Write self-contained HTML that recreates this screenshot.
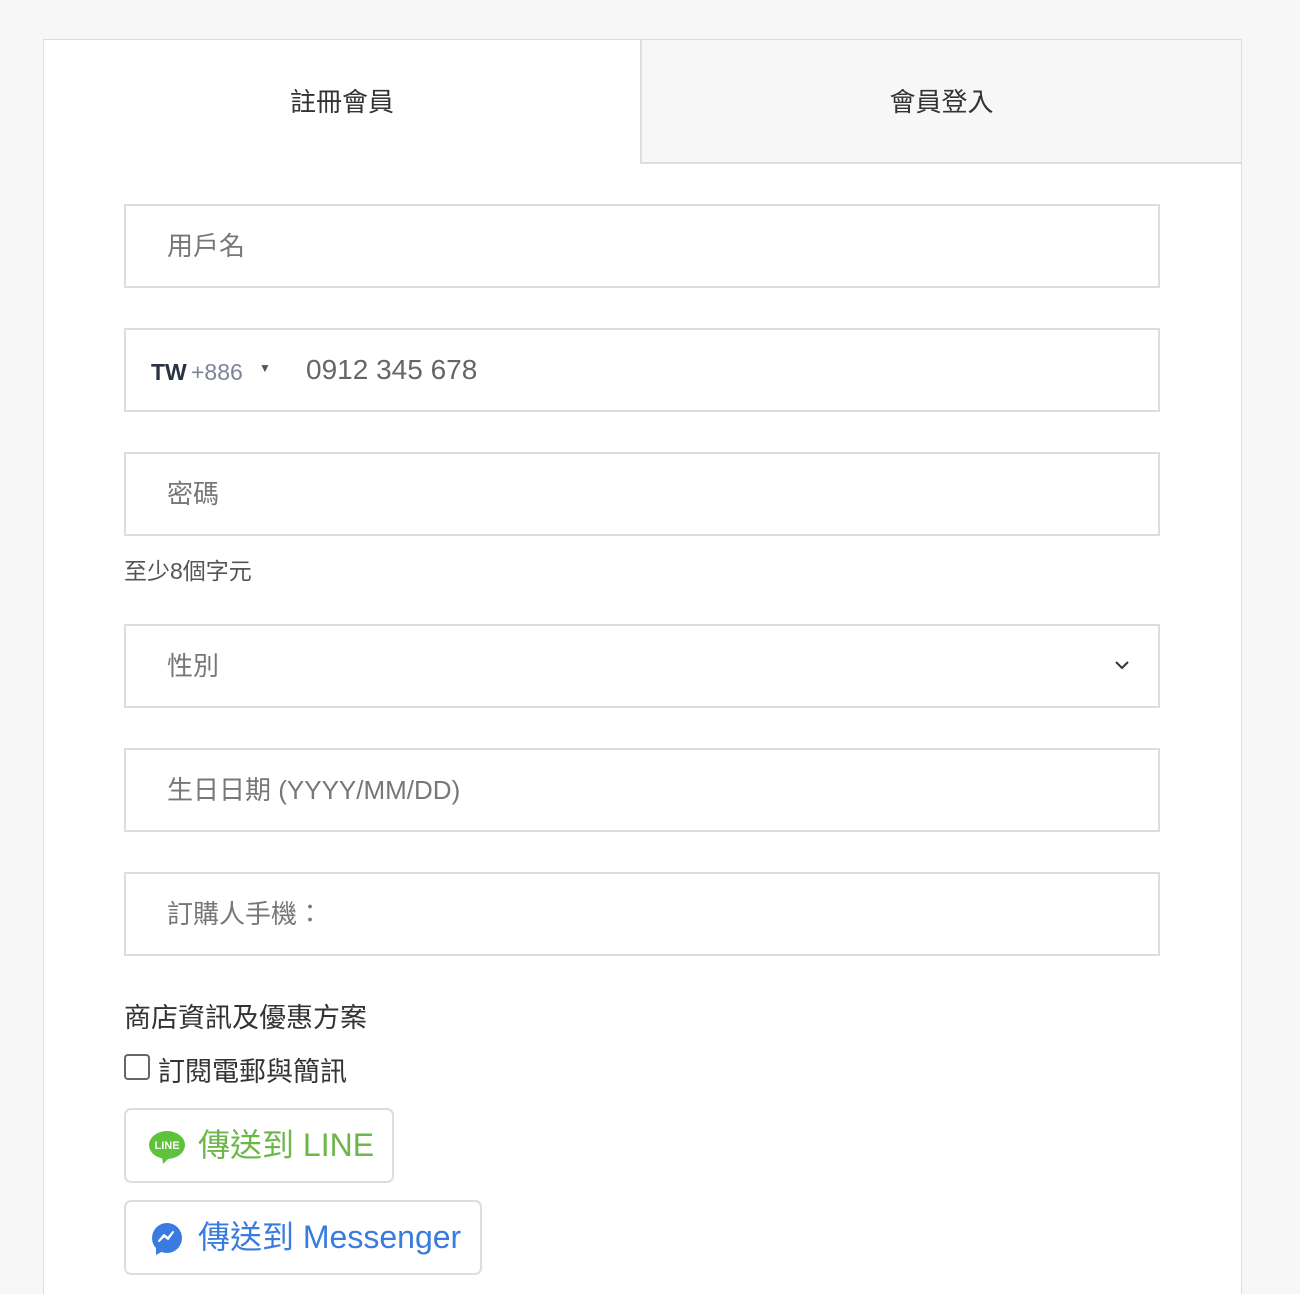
<!DOCTYPE html>
<html><head><meta charset="utf-8"><style>
html,body{margin:0;width:1300px;height:1294px;overflow:hidden}
body{background:#f7f7f7;font-family:"Liberation Sans","Noto Sans CJK TC",sans-serif;position:relative}
.box{position:absolute;left:43px;top:39px;width:1197px;height:1255px;background:#fff;border:1px solid #ddd;border-bottom:none}
.tab{position:absolute;top:0;height:123px;line-height:124px;text-align:center;font-size:26px;color:#333}
.t1{left:0;width:596px;background:#fff}
.t2{left:596px;width:601px;background:#f7f7f7;border-left:2px solid #ddd;border-bottom:2px solid #ddd;box-sizing:border-box;height:124px}
.in{position:absolute;left:124px;width:1032px;height:80px;border:2px solid #ddd;background:#fff;font-size:26px;color:#777;line-height:80px;box-sizing:content-box}
.in span.p{position:absolute;left:41px}
.small{position:absolute;left:124px;top:552px;font-size:23px;color:#555}
.btn{position:absolute;left:124px;border:2px solid #ddd;border-radius:7px;background:#fff;height:75px;box-sizing:border-box;font-size:32px;line-height:71px}
</style></head><body>
<div class="box">
<div class="tab t1">註冊會員</div>
<div class="tab t2">會員登入</div>
</div>
<div class="in" style="top:204px"><span class="p">用戶名</span></div>
<div class="in" style="top:328px"><span style="position:absolute;left:25px;font-size:23px;color:#2a3243;font-weight:bold;top:2px">TW</span><span style="position:absolute;left:65px;font-size:23px;color:#7a8499;top:2px">+886</span><span style="position:absolute;left:133px;font-size:12px;color:#555;top:-2px">▼</span><span style="position:absolute;left:180px;font-size:28px;color:#666">0912 345 678</span></div>
<div class="in" style="top:452px"><span class="p">密碼</span></div>
<div class="small">至少8個字元</div>
<div class="in" style="top:624px"><span class="p">性別</span><svg style="position:absolute;left:988px;top:34px" width="16" height="10" viewBox="0 0 16 10"><path d="M2 2l6 6 6-6" stroke="#333" stroke-width="2" fill="none"/></svg></div>
<div class="in" style="top:748px"><span class="p">生日日期 (YYYY/MM/DD)</span></div>
<div class="in" style="top:872px"><span class="p">訂購人手機：</span></div>
<div style="position:absolute;left:124px;top:996px;font-size:27px;color:#333">商店資訊及優惠方案</div>
<div style="position:absolute;left:124px;top:1054px;width:22px;height:22px;border:2px solid #666;border-radius:4px"></div>
<div style="position:absolute;left:158px;top:1050px;font-size:27px;color:#333">訂閱電郵與簡訊</div>
<div class="btn" style="top:1108px;width:270px;color:#6cb64a"><svg style="position:absolute;left:22px;top:19px" width="38" height="36" viewBox="0 0 38 36"><ellipse cx="19" cy="16" rx="18" ry="14" fill="#5ec23a"/><path d="M14 28l8 0-7 7z" fill="#5ec23a"/><text x="19" y="20" font-size="11" font-weight="bold" fill="#fff" text-anchor="middle" font-family="Liberation Sans">LINE</text></svg><span style="position:absolute;left:72px">傳送到 LINE</span></div>
<div class="btn" style="top:1200px;width:358px;color:#3a7be0"><svg style="position:absolute;left:24px;top:20px" width="34" height="34" viewBox="0 0 34 34"><circle cx="17" cy="16" r="15" fill="#3a7be0"/><path d="M6 26l0 7 7-4z" fill="#3a7be0"/><path d="M9 19l5-6 4 3 5-6-5 7-4-3z" stroke="#fff" stroke-width="2" fill="none" stroke-linejoin="round"/></svg><span style="position:absolute;left:72px">傳送到 Messenger</span></div>
</body></html>
